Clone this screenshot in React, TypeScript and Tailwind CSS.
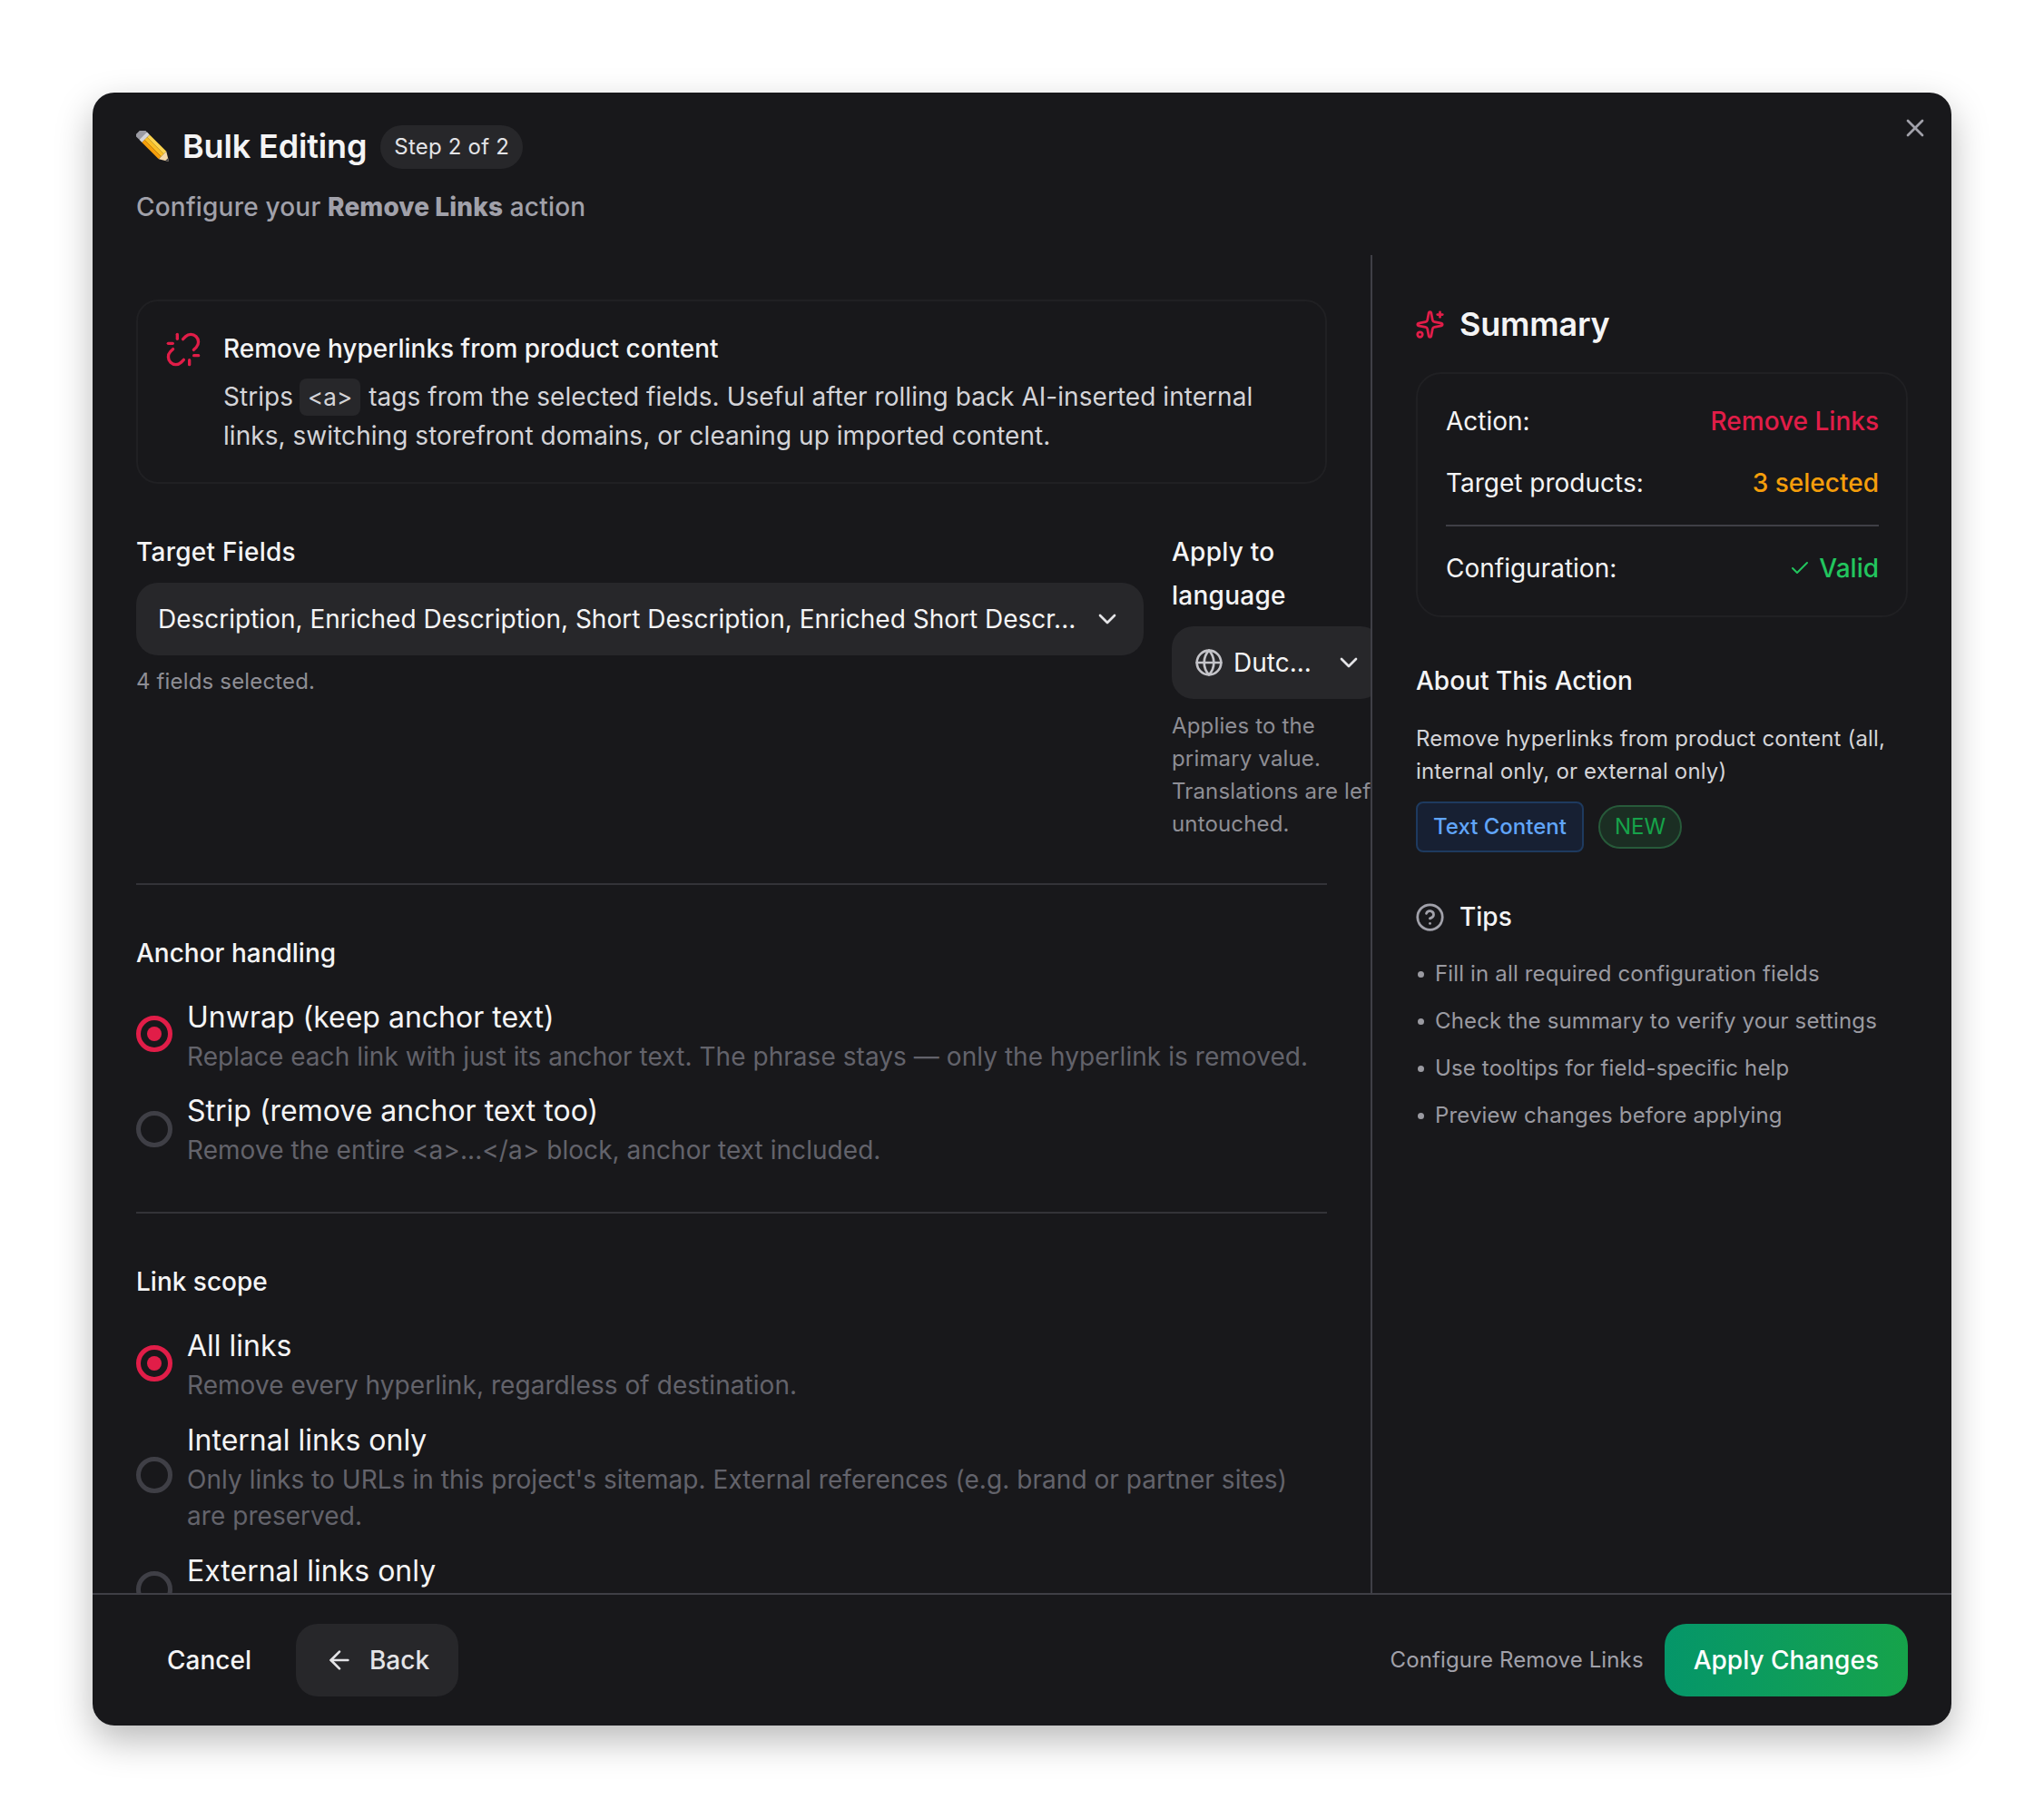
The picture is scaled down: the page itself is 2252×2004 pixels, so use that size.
import React from 'react';
import { ArrowLeft, Check, ChevronDown, CircleHelp, Globe, Sparkles, Unlink, X } from 'lucide-react';

const PencilEmoji = () => (
  <svg viewBox="0 0 36 36" className="h-[36px] w-[36px] shrink-0">
    <g transform="translate(5 -3) rotate(45 0 6)">
      <rect x="-3" y="0" width="8" height="12" rx="2" fill="#9b9ba3" />
      <rect x="4" y="0" width="4" height="12" fill="#d4d4d8" />
      <rect x="8" y="0" width="26" height="4" fill="#fcd34d" />
      <rect x="8" y="4" width="26" height="4" fill="#fbbf24" />
      <rect x="8" y="8" width="26" height="4" fill="#f59e0b" />
      <polygon points="34,0 44,6 34,12" fill="#f5d9a8" />
      <polygon points="40.5,3.9 44,6 40.5,8.1" fill="#3f3f46" />
    </g>
  </svg>
);

const Radio: React.FC<{ checked?: boolean; className: string }> = ({ checked, className }) => (
  <span
    className={`flex h-10 w-10 shrink-0 items-center justify-center rounded-full border-[5px] ${
      checked ? 'border-[#e11d48]' : 'border-[#3f3f46]'
    } ${className}`}
  >
    {checked && <span className="h-[16px] w-[16px] rounded-full bg-[#e11d48]" />}
  </span>
);

interface RadioRowProps {
  title: string;
  description?: string;
  checked?: boolean;
  radioClass: string;
}

const RadioRow: React.FC<RadioRowProps> = ({ title, description, checked, radioClass }) => (
  <div className="flex gap-[16px]">
    <Radio checked={checked} className={radioClass} />
    <div className="min-w-0 flex-1">
      <div className="text-[32px] leading-[40px] text-[#f4f4f5]">{title}</div>
      {description && (
        <div className="mt-[3px] text-[28px] leading-[40px] tracking-[0.05px] text-[#63636b]">{description}</div>
      )}
    </div>
  </div>
);

const SummaryRow: React.FC<{ label: string; children: React.ReactNode; className?: string }> = ({
  label,
  children,
  className,
}) => (
  <div className={`flex items-center justify-between text-[28px] leading-[44px] ${className ?? ''}`}>
    <span className="text-[#f4f4f5]">{label}</span>
    {children}
  </div>
);

const tips = [
  'Fill in all required configuration fields',
  'Check the summary to verify your settings',
  'Use tooltips for field-specific help',
  'Preview changes before applying',
];

export default function App() {
  return (
    <div className="h-[2004px] bg-white pl-[102px] pt-[102px] font-['Inter',sans-serif]">
      <div className="relative flex h-[1799px] w-[2048px] flex-col overflow-hidden rounded-[24px] bg-[#18181b] shadow-[0_16px_40px_rgba(0,0,0,0.28)]">
        <X className="absolute right-[24px] top-[23px] h-[32px] w-[32px] text-[#a1a1aa]" strokeWidth={2} />

        <div className="h-[179px] shrink-0 pl-[48px] pt-[36px]">
          <div className="flex items-center">
            <PencilEmoji />
            <h2 className="-mt-[3px] ml-[15px] text-[36px] font-semibold leading-[48px] tracking-[-0.15px] text-[#f4f4f5]">
              Bulk Editing
            </h2>
            <span className="ml-[15px] flex h-[48px] items-center rounded-full bg-[#27272a] px-[15px] text-[24px] tracking-[0.2px] text-[#e4e4e7]">
              Step 2 of 2
            </span>
          </div>
          <p className="mt-[20px] text-[28px] font-medium leading-[44px] tracking-[0.2px] text-[#a1a1aa]">
            Configure your <strong className="font-extrabold tracking-[0.1px]">Remove Links</strong> action
          </p>
        </div>

        <div className="flex min-h-0 flex-1">
          <div className="w-[1410px] shrink-0 overflow-hidden border-r-2 border-[#3f3f46] pl-[48px] pr-[48px] pt-[49px]">
            <div className="flex h-[203px] rounded-[24px] border-2 border-[#202023] pl-[30px] pt-[30px]">
              <Unlink className="mt-[3px] h-[40px] w-[40px] shrink-0 text-[#e11d48]" strokeWidth={2} />
              <div className="ml-[24px]">
                <div className="text-[28px] font-medium leading-[44px] text-[#f4f4f5]">
                  Remove hyperlinks from product content
                </div>
                <p className="mt-[10px] text-[28px] leading-[43px] tracking-[0.05px] text-[#d4d4d8]">
                  Strips{' '}
                  <code className="-ml-[1px] mr-[1px] rounded-[8px] bg-[#27272a] px-[9px] py-[5px] font-['Inter',sans-serif] text-[26px]">
                    &lt;a&gt;
                  </code>{' '}
                  tags from the selected fields. Useful after rolling back AI-inserted internal
                  <br />
                  links, switching storefront domains, or cleaning up imported content.
                </p>
              </div>
            </div>

            <div className="mt-[51px] flex gap-[31px]">
              <div className="w-[1110px] shrink-0">
                <div className="text-[28px] font-medium leading-[48px] tracking-[0.25px] text-[#f4f4f5]">Target Fields</div>
                <div className="mt-[10px] flex h-[80px] items-center justify-between rounded-[24px] bg-[#27272a] pl-[24px] pr-[24px]">
                  <span className="whitespace-nowrap text-[28px] text-[#f4f4f5]">
                    Description, Enriched Description, Short Description, Enriched Short Descr...
                  </span>
                  <ChevronDown className="h-[32px] w-[32px] shrink-0 text-[#e4e4e7]" strokeWidth={2} />
                </div>
                <p className="mt-[11px] text-[24px] leading-[36px] tracking-[0.16px] text-[#8e8e95]">4 fields selected.</p>
              </div>
              <div className="w-[232px] shrink-0">
                <div className="text-[28px] font-medium leading-[48px] tracking-[0.25px] text-[#f4f4f5]">Apply to language</div>
                <div className="mt-[10px] flex h-[80px] items-center rounded-[24px] bg-[#27272a] pl-[25px] pr-[21px]">
                  <Globe className="h-[32px] w-[32px] shrink-0 text-[#c4c4c9]" strokeWidth={2} />
                  <span className="ml-[11px] flex-1 whitespace-nowrap text-[28px] text-[#f4f4f5]">Dutc...</span>
                  <ChevronDown className="h-[32px] w-[32px] shrink-0 text-[#e4e4e7]" strokeWidth={2} />
                </div>
                <p className="mt-[12px] whitespace-nowrap text-[24px] leading-[36px] tracking-[0.16px] text-[#8e8e95]">
                  Applies to the
                  <br />
                  primary value.
                  <br />
                  Translations are left
                  <br />
                  untouched.
                </p>
              </div>
            </div>

            <hr className="mt-[47px] border-t-2 border-[#333338]" />

            <div className="mt-[53px] text-[28px] font-medium leading-[44px] text-[#f4f4f5]">Anchor handling</div>
            <div className="mt-[29px] flex flex-col gap-[20px]">
              <RadioRow
                checked
                radioClass="mt-[18px]"
                title="Unwrap (keep anchor text)"
                description="Replace each link with just its anchor text. The phrase stays — only the hyperlink is removed."
              />
              <RadioRow
                radioClass="mt-[20px]"
                title="Strip (remove anchor text too)"
                description="Remove the entire <a>...</a> block, anchor text included."
              />
            </div>

            <hr className="mt-[48px] border-t-2 border-[#333338]" />

            <div className="mt-[53px] text-[28px] font-medium leading-[44px] text-[#f4f4f5]">Link scope</div>
            <div className="mt-[29px] flex flex-col gap-[21px]">
              <RadioRow
                checked
                radioClass="mt-[19px]"
                title="All links"
                description="Remove every hyperlink, regardless of destination."
              />
              <RadioRow
                radioClass="mt-[38px]"
                title="Internal links only"
                description="Only links to URLs in this project's sitemap. External references (e.g. brand or partner sites) are preserved."
              />
              <RadioRow radioClass="mt-[20px]" title="External links only" />
            </div>
          </div>

          <div className="min-w-0 flex-1 pl-[48px] pr-[48px] pt-[52px]">
            <div className="flex items-center gap-[16px]">
              <Sparkles className="-ml-[1px] h-[33px] w-[33px] text-[#e11d48]" strokeWidth={2} />
              <h3 className="text-[36px] font-semibold leading-[48px] tracking-[-0.2px] text-[#f4f4f5]">Summary</h3>
            </div>

            <div className="mt-[29px] rounded-[28px] border-2 border-[#202023] pb-[30px] pl-[31px] pr-[30px] pt-[30px]">
              <SummaryRow label="Action:">
                <span className="font-medium text-[#e11d48]">Remove Links</span>
              </SummaryRow>
              <SummaryRow label="Target products:" className="mt-[24px]">
                <span className="font-medium text-[#f59e0b]">3 selected</span>
              </SummaryRow>
              <div className="mt-[24px] h-[2px] bg-[#3f3f46]" />
              <SummaryRow label="Configuration:" className="mt-[24px]">
                <span className="flex items-center gap-[9px] font-medium text-[#22c55e]">
                  <Check className="h-[24px] w-[24px]" strokeWidth={2} />
                  Valid
                </span>
              </SummaryRow>
            </div>

            <div className="mt-[48px] text-[28px] font-medium leading-[44px] text-[#f4f4f5]">About This Action</div>
            <p className="mt-[24px] text-[24px] leading-[36px] tracking-[0.17px] text-[#d4d4d8]">
              Remove hyperlinks from product content (all, internal only, or external only)
            </p>
            <div className="mt-[15px] flex items-center gap-[16px]">
              <span className="flex h-[56px] items-center rounded-[8px] border-2 border-[#1e3a5f] bg-[#172033] px-[17px] text-[24px] font-medium text-[#60a5fa]">
                Text Content
              </span>
              <span className="flex h-[48px] items-center rounded-full border-2 border-[#275a3a] bg-[#1b2e23] px-[16px] text-[24px] text-[#16a34a]">
                NEW
              </span>
            </div>

            <div className="mt-[49px] flex items-center gap-[16px]">
              <CircleHelp className="-ml-[1px] h-[33px] w-[33px] text-[#a1a1aa]" strokeWidth={2} />
              <span className="text-[28px] font-medium leading-[44px] text-[#f4f4f5]">Tips</span>
            </div>
            <ul className="mt-[23px] flex flex-col gap-[16px]">
              {tips.map((tip) => (
                <li key={tip} className="flex items-center text-[24px] leading-[36px] tracking-[0.15px] text-[#9a9aa1]">
                  <span className="ml-[2px] mr-[12px] h-[7px] w-[7px] shrink-0 rounded-full bg-[#9a9aa1]" />
                  {tip}
                </li>
              ))}
            </ul>
          </div>
        </div>

        <div className="flex h-[146px] shrink-0 items-center justify-between border-t-2 border-[#3f3f46] pl-[47px] pr-[48px]">
          <div className="flex items-center gap-[14px]">
            <button className="h-[80px] rounded-[24px] px-[35px] text-[28px] font-medium text-[#f4f4f5]">Cancel</button>
            <button className="flex h-[80px] items-center rounded-[24px] bg-[#27272a] pl-[32px] pr-[32px] text-[28px] font-medium text-[#e4e4e7]">
              <ArrowLeft className="h-[32px] w-[32px]" strokeWidth={2} />
              <span className="ml-[17px]">Back</span>
            </button>
          </div>
          <div className="flex items-center gap-[23px]">
            <span className="text-[24px] tracking-[0.13px] text-[#a1a1aa]">Configure Remove Links</span>
            <button className="h-[80px] rounded-[24px] bg-gradient-to-r from-[#059669] to-[#16a34a] px-[32px] text-[28px] font-medium text-white">
              Apply Changes
            </button>
          </div>
        </div>
      </div>
    </div>
  );
}
